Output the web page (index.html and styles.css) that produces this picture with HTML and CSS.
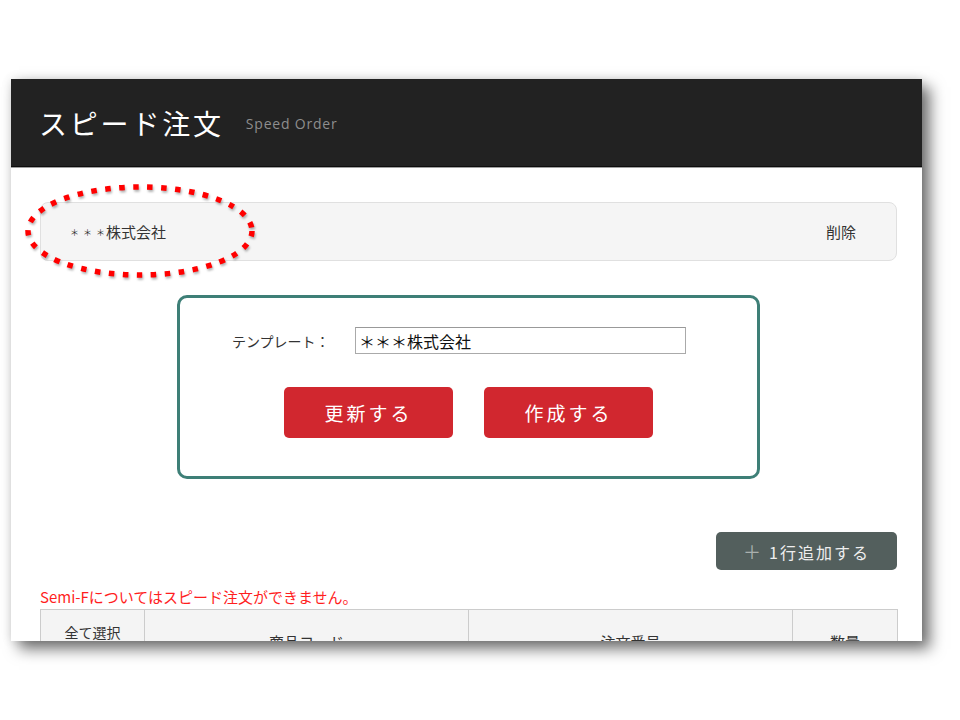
FILE: index.html
```html
<!DOCTYPE html>
<html lang="ja">
<head>
<meta charset="utf-8">
<title>スピード注文</title>
<link rel="stylesheet" href="styles.css">
</head>
<body>
<div class="stage">
  <div class="panel">
    <header class="hdr">
      <h1 class="title">スピード注文</h1>
      <span class="subtitle">Speed Order</span>
    </header>
    <main class="content">
      <div class="company-row">
        <span class="company"><span class="ast">＊ ＊ ＊</span>株式会社</span>
        <span class="del">削除</span>
      </div>
      <div class="tpl">
        <div class="tpl-line">
          <label class="tpl-label">テンプレート：</label>
          <input class="tpl-input" type="text" value="＊＊＊株式会社">
        </div>
        <div class="tpl-btns">
          <button class="btn-red">更新する</button>
          <button class="btn-red">作成する</button>
        </div>
      </div>
      <div class="add-line">
        <button class="btn-add"><span class="plus">＋</span>1行追加する</button>
      </div>
      <p class="notice">Semi-Fについてはスピード注文ができません。</p>
      <table class="grid">
        <colgroup>
          <col class="c1"><col class="c2"><col class="c3"><col class="c4">
        </colgroup>
        <thead>
          <tr>
            <th class="sel">全て選択<br><span class="chk"></span></th>
            <th class="mid">商品コード</th>
            <th class="mid">注文番号</th>
            <th class="mid">数量</th>
          </tr>
        </thead>
      </table>
    </main>
    <svg class="mark" width="246" height="104" viewBox="0 0 246 104" aria-hidden="true">
      <ellipse cx="118" cy="48" rx="112" ry="44" fill="none" stroke="#ff0000" stroke-width="5.5" stroke-dasharray="5.5 8.5"/>
    </svg>
  </div>
</div>
</body>
</html>
```
FILE: styles.css
```css
html, body {
  margin: 0;
  padding: 0;
  background: #ffffff;
}
body {
  width: 960px;
  height: 720px;
  overflow: hidden;
  font-family: "Noto Sans CJK JP", "Noto Sans", sans-serif;
  color: #333;
}
.stage {
  padding: 79px 0 0 11px;
}
.panel {
  position: relative;
  width: 911px;
  height: 562px;
  overflow: hidden;
  background: #fff;
  box-shadow: 8px 8px 14px rgba(0,0,0,0.55), 0 0 10px rgba(0,0,0,0.12);
}
.hdr {
  height: 87px;
  background: #222;
  border-bottom: 1px solid #0e0e0e;
  box-shadow: 0 1px 0 #a0a0a0;
  display: flex;
  align-items: center;
  padding-left: 28px;
}
.title {
  margin: 0;
  font-size: 28px;
  font-weight: 400;
  letter-spacing: 2.8px;
  color: #fff;
}
.subtitle {
  margin-left: 22px;
  margin-top: 2px;
  font-family: "Open Sans", "Noto Sans", sans-serif;
  font-size: 14px;
  letter-spacing: 0.8px;
  color: #8e8e8e;
}
.content {
  padding: 35px 25px 0 29px;
}
.company-row {
  height: 57px;
  background: #f5f5f5;
  border: 1px solid #e0e0e0;
  border-radius: 8px;
  display: flex;
  align-items: center;
  justify-content: space-between;
  padding: 0 40px 0 29px;
  font-size: 15px;
  color: #333;
}
.ast {
  font-size: 9px;
  letter-spacing: 1px;
  vertical-align: 2px;
}
.tpl {
  width: 577px;
  margin: 34px auto 0;
  border: 3px solid #3e7f77;
  border-radius: 10px;
  padding: 29px 0 38px;
}
.tpl-line {
  display: flex;
  align-items: center;
  padding-left: 52px;
}
.tpl-label {
  width: 123px;
  font-size: 14px;
  color: #333;
}
.tpl-input {
  box-sizing: border-box;
  width: 331px;
  height: 27px;
  border: 1px solid #aaa;
  border-top-color: #999;
  padding: 0 3px;
  font-family: "Noto Sans CJK JP", sans-serif;
  font-size: 16px;
  color: #111;
  margin: 0;
}
.tpl-btns {
  display: flex;
  justify-content: center;
  gap: 31px;
  margin-top: 33px;
}
.btn-red {
  width: 169px;
  height: 51px;
  border: none;
  border-radius: 5px;
  background: #d1272f;
  color: #fff;
  font-family: "Noto Sans CJK JP", sans-serif;
  font-size: 19px;
  letter-spacing: 3px;
  padding: 0;
}
.add-line {
  display: flex;
  justify-content: flex-end;
  margin-top: 53px;
}
.btn-add {
  width: 181px;
  height: 38px;
  border: none;
  border-radius: 5px;
  background: #535f5d;
  color: #eee;
  font-family: "Noto Sans CJK JP", sans-serif;
  font-size: 16px;
  letter-spacing: 2px;
  padding: 0;
}
.plus {
  color: #a9b0ae;
  margin-right: 6px;
  font-size: 18px;
}
.notice {
  margin: 16px 0 0;
  height: 22px;
  line-height: 22px;
  font-size: 15px;
  color: #ff1e1e;
}
.grid {
  margin-top: 1px;
  width: 857px;
  border-collapse: collapse;
  table-layout: fixed;
}
.c1 { width: 104px; }
.c2 { width: 324px; }
.c3 { width: 324px; }
.c4 { width: 105px; }
.grid th {
  background: #f4f4f4;
  border: 1px solid #ccc;
  font-size: 15px;
  font-weight: 400;
  color: #333;
  text-align: center;
  vertical-align: top;
  padding: 0;
}
.grid th.mid {
  line-height: 20px;
  padding-top: 22px;
  height: 44px;
}
.grid th.sel {
  font-size: 14px;
  line-height: 24px;
  padding-top: 10px;
}
.chk {
  display: inline-block;
  width: 12px;
  height: 12px;
  border: 1px solid #888;
  background: #fff;
}
.mark {
  position: absolute;
  left: 11px;
  top: 104px;
  filter: drop-shadow(1px 2px 1px rgba(0,0,0,0.3));
}
```
